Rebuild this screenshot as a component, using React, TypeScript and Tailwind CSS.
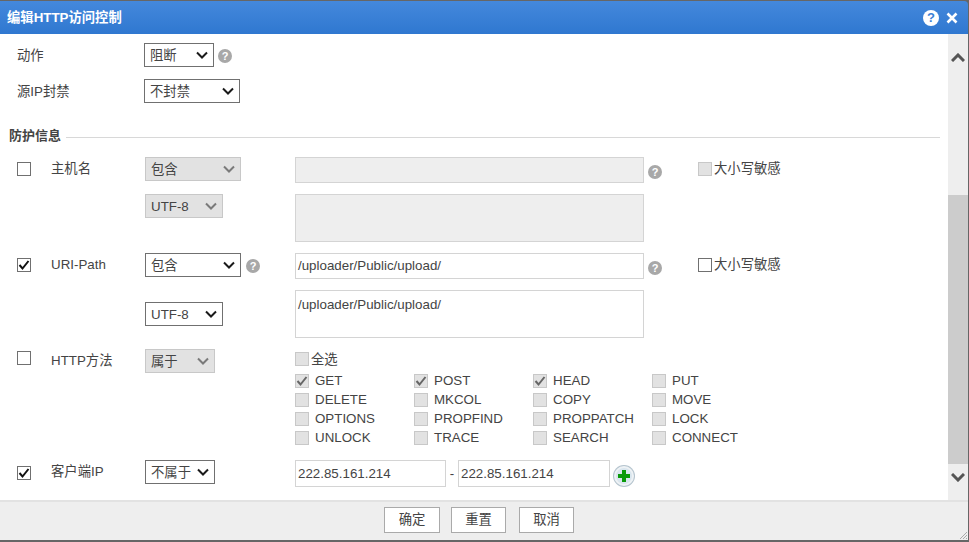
const font = "[font-family:'Liberation_Sans','Noto_Sans_CJK_SC',sans-serif]";

function Chevron({ disabled }: { disabled?: boolean }) {
  return (
    <svg width="12" height="8" viewBox="0 0 12 8" className="shrink-0">
      <path d="M1 1.5 L6 6.5 L11 1.5" fill="none" stroke={disabled ? '#7a7a7a' : '#1a1a1a'} strokeWidth="2" />
    </svg>
  );
}

function Select({ text, width, disabled }: { text: string; width: string; disabled?: boolean }) {
  return (
    <div
      className={`${width} h-6 shrink-0 flex items-center justify-between pl-[5px] pr-[5px] border text-[13.33px] leading-none ${
        disabled ? 'bg-[#e2e2e2] border-[#c8c8c8]' : 'bg-white border-[#707070]'
      }`}
    >
      <span className="pt-px">{text}</span>
      <Chevron disabled={disabled} />
    </div>
  );
}

function Check({ checked, disabled }: { checked?: boolean; disabled?: boolean }) {
  return (
    <div
      className={`w-[14px] h-[14px] shrink-0 border flex items-center justify-center ${
        disabled ? 'bg-[#e2e2e2] border-[#c8c8c8]' : 'bg-white border-[#707070]'
      }`}
    >
      {checked && (
        <svg width="12" height="12" viewBox="0 0 12 12">
          <path d="M1.5 6 L4.5 9.5 L10.5 2" fill="none" stroke={disabled ? '#666' : '#111'} strokeWidth="2" />
        </svg>
      )}
    </div>
  );
}

function Help({ className = '' }: { className?: string }) {
  return (
    <div className={`w-[14px] h-[14px] shrink-0 rounded-full bg-[#a8a8a8] text-white text-[11px] font-bold leading-[14px] text-center ${className}`}>
      ?
    </div>
  );
}

function Field({ value, width = 'w-[349px]', height = 'h-[26px] leading-[24px]', disabled }: { value?: string; width?: string; height?: string; disabled?: boolean }) {
  return (
    <div
      className={`${width} ${height} shrink-0 border border-[#d4d4d4] px-[2px] text-[13.33px] text-[#444] ${
        disabled ? 'bg-[#eeeeee]' : 'bg-white'
      }`}
    >
      {value}
    </div>
  );
}

function Method({ name, checked }: { name: string; checked?: boolean }) {
  return (
    <div className="w-[119px] h-[19px] flex items-center gap-[6px] text-[13.33px]">
      <Check checked={checked} disabled />
      <span>{name}</span>
    </div>
  );
}

function CaseOption({ disabled }: { disabled?: boolean }) {
  return (
    <div className="ml-[36px] mt-[5px] h-[14px] flex items-center gap-[2px] text-[13.33px]">
      <Check disabled={disabled} />
      <span>大小写敏感</span>
    </div>
  );
}

const methods: [string, boolean?][] = [
  ['GET', true], ['POST', true], ['HEAD', true], ['PUT'],
  ['DELETE'], ['MKCOL'], ['COPY'], ['MOVE'],
  ['OPTIONS'], ['PROPFIND'], ['PROPPATCH'], ['LOCK'],
  ['UNLOCK'], ['TRACE'], ['SEARCH'], ['CONNECT'],
];

export default function App() {
  return (
    <div className={`w-[969px] h-[542px] overflow-hidden bg-[#666] pt-px pr-px pb-[2px] flex flex-col text-[#444] ${font}`}>
      <div className="h-[33px] shrink-0 rounded-tr-[4px] bg-gradient-to-b from-[#4488dc] to-[#2f78d0] flex items-center pl-[7px] pr-[10px] text-white text-[13.33px] font-bold">
        <span className="flex-1">编辑HTTP访问控制</span>
        <div className="w-4 h-4 rounded-full bg-white text-[#3a80d6] text-[13px] leading-4 text-center mr-[7px]">?</div>
        <svg width="12" height="12" viewBox="0 0 12 12">
          <path d="M1.5 1.5 L10.5 10.5 M10.5 1.5 L1.5 10.5" stroke="#fff" strokeWidth="2.6" />
        </svg>
      </div>

      <div className="h-[466px] shrink-0 flex bg-white">
        <div className="flex-1 min-w-0 pt-[9px] text-[13.33px]">
          <div className="flex items-center h-6 pl-[17px]">
            <span className="w-[127px] pt-[2px]">动作</span>
            <Select text="阻断" width="w-[70px]" />
            <Help className="ml-1 mt-[2px]" />
          </div>
          <div className="flex items-center h-6 pl-[17px] mt-3">
            <span className="w-[127px] pt-[2px]">源IP封禁</span>
            <Select text="不封禁" width="w-[96px]" />
          </div>

          <div className="flex items-center mt-[23px] pl-[9px] pr-2 h-5">
            <span className="font-bold text-[13px]">防护信息</span>
            <div className="flex-1 h-px bg-[#d8d8d8] ml-[5px] mt-[2px]" />
          </div>

          <div className="flex mt-[11px] pl-[17px] h-[85px]">
            <div className="w-[34px] pt-[5px]"><Check /></div>
            <span className="w-[94px] pt-[2px]">主机名</span>
            <div className="w-[150px] flex flex-col gap-[13px]">
              <Select text="包含" width="w-[96px]" disabled />
              <Select text="UTF-8" width="w-[78px]" disabled />
            </div>
            <div className="flex flex-col gap-[11px]">
              <div className="flex">
                <Field disabled />
                <Help className="ml-1 mt-[8px]" />
                <CaseOption disabled />
              </div>
              <Field disabled height="h-[48px]" />
            </div>
          </div>

          <div className="flex mt-[11px] pl-[17px] h-[85px]">
            <div className="w-[34px] pt-[5px]"><Check checked /></div>
            <span className="w-[94px] pt-[2px]">URI-Path</span>
            <div className="w-[150px] flex flex-col gap-[25px]">
              <div className="flex items-center">
                <Select text="包含" width="w-[96px]" />
                <Help className="ml-[5px] mt-[2px]" />
              </div>
              <Select text="UTF-8" width="w-[78px]" />
            </div>
            <div className="flex flex-col gap-[11px]">
              <div className="flex">
                <Field value="/uploader/Public/upload/" />
                <Help className="ml-1 mt-[8px]" />
                <CaseOption />
              </div>
              <Field value="/uploader/Public/upload/" height="h-[48px] pt-[6px] leading-[16px]" />
            </div>
          </div>

          <div className="flex mt-[11px] pl-[17px]">
            <div className="w-[34px] pt-[2px]"><Check /></div>
            <span className="w-[94px] pt-[2px]">HTTP方法</span>
            <div className="w-[150px]">
              <Select text="属于" width="w-[70px]" disabled />
            </div>
            <div className="flex flex-col">
              <div className="flex items-center gap-[2px] h-[14px] mt-[3px] mb-[5px]">
                <Check disabled />
                <span className="pt-[2px]">全选</span>
              </div>
              <div className="grid grid-cols-[119px_119px_119px_119px]">
                {methods.map(([name, checked]) => (
                  <Method key={name} name={name} checked={checked} />
                ))}
              </div>
            </div>
          </div>

          <div className="flex mt-[13px] pl-[17px]">
            <div className="w-[34px] pt-[6px]"><Check checked /></div>
            <span className="w-[94px] pt-[2px]">客户端IP</span>
            <div className="w-[150px]">
              <Select text="不属于" width="w-[70px]" />
            </div>
            <div className="flex items-center">
              <Field value="222.85.161.214" width="w-[151px]" height="h-[27px] leading-[25px]" />
              <span className="w-[12px] text-center">-</span>
              <Field value="222.85.161.214" width="w-[152px]" height="h-[27px] leading-[25px]" />
              <div className="w-5 h-5 ml-1 mt-[4px] rounded-full bg-[#d9e6ee] border-2 border-[#eef2f5] shadow-[0_0_0_1px_#b5c4ce] flex items-center justify-center">
                <svg width="14" height="14" viewBox="0 0 14 14">
                  <path d="M7 1 V13 M1 7 H13" stroke="#0a9a0a" strokeWidth="4" />
                </svg>
              </div>
            </div>
          </div>
        </div>

        <div className="w-5 shrink-0 bg-[#eeeeee] flex flex-col items-center">
          <svg width="14" height="9" viewBox="0 0 14 9" className="mt-[19px]">
            <path d="M1 8 L7 2 L13 8" fill="none" stroke="#555" strokeWidth="3" />
          </svg>
          <div className="w-full h-[269px] mt-[133px] bg-[#cccccc]" />
          <svg width="14" height="9" viewBox="0 0 14 9" className="mt-[9px]">
            <path d="M1 1 L7 7 L13 1" fill="none" stroke="#555" strokeWidth="3" />
          </svg>
        </div>
      </div>

      <div className="relative flex-1 bg-[#eeeeee] border-t-2 border-[#e2e2e2] flex items-start pl-[384px] pt-[5px] text-[13.33px]">
        <button className="w-[56px] h-[26px] bg-white border border-[#aaa] text-[#444]">确定</button>
        <button className="w-[55px] h-[26px] ml-[11px] bg-white border border-[#aaa] text-[#444]">重置</button>
        <button className="w-[55px] h-[26px] ml-[13px] bg-white border border-[#aaa] text-[#444]">取消</button>
        <svg width="7" height="7" viewBox="0 0 7 7" className="absolute right-[1px] bottom-[1px]">
          <path d="M0 7 L7 0 M3 7 L7 3 M6 7 L7 6" stroke="#aaa" strokeWidth="1" />
        </svg>
      </div>
    </div>
  );
}
